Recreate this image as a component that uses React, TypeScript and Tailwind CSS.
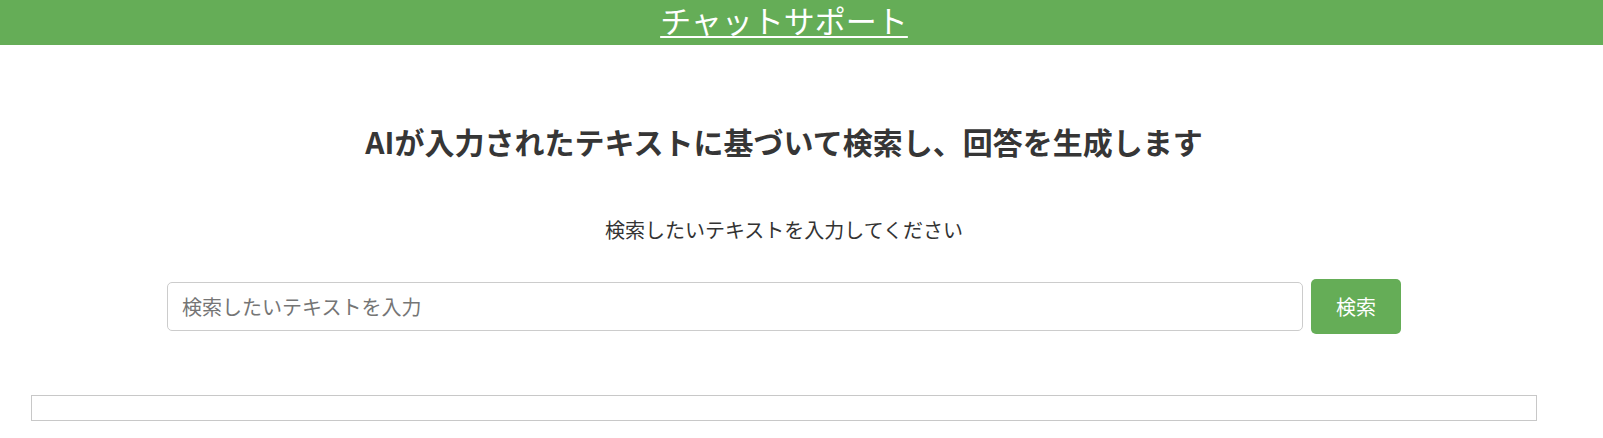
import React from "react";

export default function App() {
  const font = { fontFamily: '"Noto Sans CJK JP", "Noto Sans", sans-serif' };
  return (
    <div className="w-[1603px] h-[438px] bg-white overflow-hidden" style={font}>
      <header className="h-[45px] bg-[#65ad57] w-full">
        <div className="w-[1568px] flex justify-center">
          <a className="text-white text-[31px] leading-[40px] underline decoration-[2px] underline-offset-[3px]">
            チャットサポート
          </a>
        </div>
      </header>
      <main className="w-[1568px] flex flex-col items-center">
        <h1 className="mt-[72px] text-[30px] leading-[48px] font-bold text-[#363636]">
          AIが入力されたテキストに基づいて検索し、回答を生成します
        </h1>
        <p className="mt-[52px] text-[20px] leading-[26px] text-[#333333]">
          検索したいテキストを入力してください
        </p>
        <div className="mt-[36px] flex items-center gap-[8px]">
          <input
            className="w-[1136px] h-[49px] border border-[#cccccc] rounded-[5px] px-[14px] text-[20px] text-[#333] placeholder:text-[#757575] outline-none"
            placeholder="検索したいテキストを入力"
            style={font}
          />
          <button
            className="w-[90px] h-[55px] bg-[#65ad57] rounded-[5px] text-white text-[20px]"
            style={font}
          >
            検索
          </button>
        </div>
        <div className="mt-[61px] w-[1506px] h-[26px] border border-[#c8c8c8]" />
      </main>
    </div>
  );
}
